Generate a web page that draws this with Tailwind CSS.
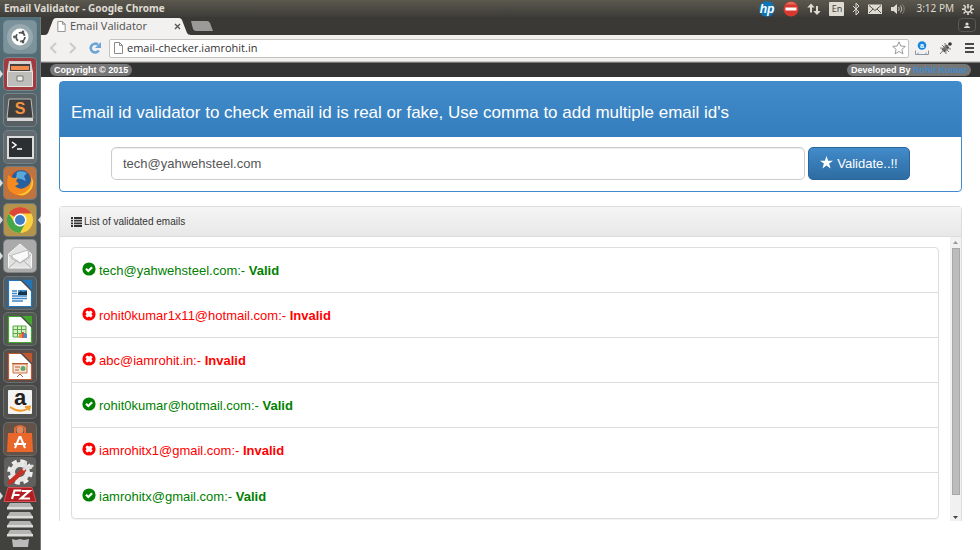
<!DOCTYPE html>
<html lang="en">
  <head>
    <meta charset="UTF-8" />
    <meta name="viewport" content="width=device-width, initial-scale=1.0" />
    <title>Email Validator</title>
    <script src="https://cdn.jsdelivr.net/npm/@tailwindcss/browser@4"></script>
  </head>
  <body
    class="flex min-h-screen flex-col bg-white font-['Liberation_Sans',Arial,sans-serif]"
  >
    <!-- Icons used more than once -->
    <svg class="hidden">
      <symbol id="page" viewBox="0 0 9 12">
        <path d="M.5.5h5l3 3v8h-8z M5.5.5v3h3" fill="#fff" stroke="#8a8a8a" />
      </symbol>
      <symbol id="ok" viewBox="0 0 14 14">
        <circle cx="7" cy="7" r="6.6" fill="#008000" />
        <path d="M4 6.800l2.300 2.200 3.800-3.800" fill="none" stroke="#fff" stroke-width="2.200" />
      </symbol>
      <symbol id="bad" viewBox="0 0 14 14">
        <circle cx="7" cy="7" r="6.6" fill="#f00" />
        <path d="M5.2 3.4L7 4.6l1.8-1.2 1.8 1.8L9.4 7l1.2 1.8-1.8 1.8L7 9.4l-1.8 1.2-1.8-1.8L4.6 7 3.4 5.2z" fill="#fff" />
      </symbol>
      <symbol id="doc" viewBox="0 0 32 32">
        <path d="M4.500 3.500h14l9 9v17h-23z" fill="#fff" stroke="currentColor" stroke-width="1.200" />
        <path d="M17 3h11v11z" fill="currentColor" />
        <path d="M16.500 2.500L28 14" stroke="#4a4a4a" stroke-width="1.500" />
      </symbol>
    </svg>

    <header
      class="flex h-[17px] items-center justify-between bg-linear-to-b from-[#5b594e] to-[#3e3c38] pl-1 pr-1.5 font-['Noto_Sans','Open_Sans',sans-serif] text-[10px] text-[#dfdbd2]"
    >
      <h1 class="text-[10px] font-bold">Email Validator - Google Chrome</h1>
      <div class="flex items-center">
        <svg class="mr-2 size-4" viewBox="0 0 16 16">
          <circle cx="8" cy="8" r="7.8" fill="#0d74b8" />
          <text x="8" y="11.5" text-anchor="middle" font-family="Liberation Sans" font-size="12" font-style="italic" font-weight="bold" fill="#fff">hp</text>
        </svg>
        <svg class="mr-2 size-4" viewBox="0 0 16 16">
          <circle cx="8" cy="8" r="7.5" fill="#d8392f" />
          <path d="M2.5 3.5a7 7 0 0 1 11 0z" fill="#e9685c" />
          <path d="M2.5 6.5h11v3h-11z" fill="#fff" />
        </svg>
        <svg class="mr-2 h-4 w-3.5" viewBox="0 0 14 16">
          <path d="M4 2.500L.3 6.500H3v5h2v-5h2.700z M10 14l3.700-4H11V5H9v5H6.300z" fill="#dfdbd2" />
        </svg>
        <span class="mr-2 h-3.5 w-[15px] rounded-[1px] bg-[#dfdbd2] text-center text-[9px] leading-3.5 text-[#45433d]">En</span>
        <svg class="mr-2 h-3.5 w-2" viewBox="0 0 8 14">
          <path d="M1 4l6 6-3 3V1l3 3-6 6" fill="none" stroke="#dfdbd2" />
        </svg>
        <svg class="mr-2 h-3 w-3.5" viewBox="0 0 14 12">
          <path d="M0 1.500h14v9.500H0z" fill="#dfdbd2" />
          <path d="M1 2.500l6 5 6-5M1 10l4-4M13 10L9 6" fill="none" stroke="#55534b" />
        </svg>
        <svg class="mr-2.5 h-3 w-4" viewBox="0 0 16 12">
          <path d="M1 4h2.500L7 1v10L3.500 8H1z" fill="#dfdbd2" />
          <path d="M8.500 4q1.500 2 0 4M10.500 2.500q2.700 3.500 0 7" fill="none" stroke="#c5c2b9" />
          <path d="M12.500 1.300q3.500 4.700 0 9.400" fill="none" stroke="#85837b" />
        </svg>
        <span class="mr-2">3:12 PM</span>
        <svg class="size-3" viewBox="0 0 12 12" fill="none" stroke="#dfdbd2">
          <path d="M4.200 3.400a3.200 3.200 0 1 0 3.600 0" stroke-width="1.500" />
          <path d="M6 1v4.500" stroke-width="1.600" />
          <path d="M0 6.200h2M10 6.200h2M1.600 2l1.500 1.500M10.400 2L8.900 3.500M1.600 10.500L3.100 9M10.400 10.500L8.900 9M6 10v2" stroke-width="1.600" />
        </svg>
      </div>
    </header>

    <div class="flex flex-1">
      <nav
        aria-label="Launcher"
        class="flex w-[41px] flex-col items-center border-r border-[#777] bg-linear-to-b from-[#54717b] via-[#4b4f50] to-[#41413e] pr-px pt-1"
      >
        <div class="flex h-[434px] flex-col justify-between">
          <svg class="size-8 rounded-sm bg-[#7d939c] ring-1 ring-white/20" viewBox="0 0 32 32">
            <circle cx="16" cy="16" r="13" fill="#97a8af" />
            <circle cx="16" cy="16" r="8.500" fill="#fff" />
            <circle cx="16.500" cy="16" r="4.400" fill="none" stroke="#555" stroke-width="1.800" stroke-dasharray="7.200 2" />
            <circle cx="10.500" cy="16" r="1.400" fill="#555" />
            <circle cx="19" cy="11" r="1.400" fill="#555" />
            <circle cx="19" cy="21" r="1.400" fill="#555" />
          </svg>
          <svg class="size-8 overflow-visible rounded-sm bg-[#a03b40] ring-1 ring-white/20" viewBox="0 0 32 32">
            <path d="M-4 12l3 4-3 4z" fill="#ddd" />
            <path d="M5 3h22l2 11H3z" fill="#d4d3d0" />
            <path d="M6 6h20v7H6z" fill="#47403c" />
            <path d="M7 8h18v4H7z" fill="#f28b4b" />
            <path d="M3.500 13.500h25v15h-25z" fill="#bdbdba" stroke="#e5e5e3" />
            <path d="M13 18h6v5h-6z" fill="#eee" stroke="#777" />
          </svg>
          <svg class="size-8 rounded-sm bg-[#596063] ring-1 ring-white/20" viewBox="0 0 32 32">
            <path d="M5 5h22l2 19H3z" fill="#3e3e3e" stroke="#bbb" />
            <path d="M3 24h26v3H3z" fill="#d6d6d6" />
            <text x="16" y="20" text-anchor="middle" font-family="Liberation Sans" font-size="16" font-weight="bold" fill="#f5923c">S</text>
          </svg>
          <svg class="size-8 rounded-sm bg-[#646b70] ring-1 ring-white/20" viewBox="0 0 32 32">
            <path d="M4 6h25v21H4z" fill="#2c2f32" stroke="#ddd" stroke-width="2" />
            <path d="M8 11l4 3-4 3M13 18h5" fill="none" stroke="#fff" stroke-width="1.500" />
          </svg>
          <svg class="size-8 overflow-visible rounded-sm bg-[#bd743e] ring-1 ring-white/20" viewBox="0 0 32 32">
            <path d="M-4 12l3 4-3 4z" fill="#ddd" />
            <circle cx="16" cy="16" r="13" fill="#e8601c" />
            <circle cx="17" cy="13" r="10" fill="#285f9e" />
            <path d="M13 5q5-2 10 1l-3 3 2 5-5-2-5-1z" fill="#59a9d8" />
            <path d="M4 8l5 3 5 0-2 3 3 3-4 2q5 5 11 1 7-4 5-13 4 8 0 15-5 7-13 6Q3 26 3 16z" fill="#f58a20" />
            <path d="M27 10q2 8-3 13t-12 4q8 4 14-3 6-7 1-14z" fill="#fbc52d" />
          </svg>
          <svg class="size-8 overflow-visible rounded-sm bg-[#b4934c] ring-1 ring-white/20" viewBox="0 0 32 32">
            <path d="M-4 12l3 4-3 4z M37 12l-3 4 3 4z" fill="#ddd" />
            <circle cx="16" cy="16" r="13" fill="#fad13c" />
            <path d="M16 16L4.700 9.500A13 13 0 0 1 27.300 9.500H16z" fill="#dc4838" />
            <path d="M4.700 9.500A13 13 0 0 0 16 29l5.500-10-11-.5z" fill="#45a64a" />
            <circle cx="16" cy="16" r="6.500" fill="#fff" />
            <circle cx="16" cy="16" r="5" fill="#3e7fc4" />
          </svg>
          <svg class="size-8 overflow-visible rounded-sm bg-[#aaa] ring-1 ring-white/30" viewBox="0 0 32 32">
            <path d="M-4 12l3 4-3 4z" fill="#ddd" />
            <path d="M4.500 14L16 4l11.500 10v14h-23z" fill="#e2e2e0" stroke="#f8f8f8" />
            <path d="M8 15l16-5 1 8-9 5-8-4z" fill="#fafafa" stroke="#bbb" />
            <path d="M4.500 28l9-8M27.500 28l-9-8M5 15l11 8 11-8" fill="none" stroke="#b5b5b5" />
          </svg>
          <svg class="size-8 rounded-sm bg-[#4a5e6c] text-[#2475b8] ring-1 ring-white/20" viewBox="0 0 32 32">
            <use href="#doc" />
            <path d="M8 14h5M8 16.500h5M8 19h15M8 21.500h15M8 24h11" stroke="#3b89ca" stroke-width="1.400" />
            <path d="M14 13h9v5h-9z" fill="#4a90c8" />
            <path d="M14 18v-2l3-2 2 1 4-1v4z" fill="#15344d" />
          </svg>
          <svg class="size-8 rounded-sm bg-[#505a4e] text-[#42a72c] ring-1 ring-white/20" viewBox="0 0 32 32">
            <use href="#doc" />
            <path d="M9 13h13v11H9z" fill="#d9efc9" stroke="#58a846" />
            <path d="M9 16.500h13M9 20.500h13M13.500 13v11M17.500 13v11" stroke="#58a846" />
            <path d="M15 21h3v4h-3z" fill="#ed8d37" />
            <path d="M18 19h2v6h-2z" fill="#d45454" />
            <path d="M20 21h3v4h-3z" fill="#4a8ac4" />
          </svg>
          <svg class="size-8 rounded-sm bg-[#5b4e49] text-[#bd5830] ring-1 ring-white/20" viewBox="0 0 32 32">
            <use href="#doc" />
            <path d="M9 14h14v9H9z" fill="#f8e2d1" stroke="#cf7045" />
            <path d="M8 13.500h16M11 17h5M11 20h4M13 27l3-3 3 3" fill="none" stroke="#b75a34" />
            <circle cx="19" cy="18.500" r="2.500" fill="#61a86a" />
          </svg>
          <svg class="size-8 rounded-sm bg-[#525250] ring-1 ring-white/20" viewBox="0 0 32 32">
            <rect x="4" y="4" width="24" height="24" rx="1" fill="#f4f4f2" />
            <text x="16" y="19" text-anchor="middle" font-family="Liberation Sans" font-size="22" font-weight="bold" fill="#222">a</text>
            <path d="M6 21q10 7 19 1M21 21l5-.5-1 4" fill="none" stroke="#f39a28" stroke-width="1.800" />
          </svg>
          <svg class="size-8 rounded-sm bg-[#625248] ring-1 ring-white/20" viewBox="0 0 32 32">
            <path d="M11 12V5q5-4 10 0v7" fill="none" stroke="#d96936" stroke-width="2" />
            <circle cx="16" cy="7" r="3.500" fill="#df875f" />
            <path d="M4 10h24l1 19H3z" fill="#ea672b" />
            <path d="M11 25l4.500-11h1L21 25M10 21h12" fill="none" stroke="#fff" stroke-width="2" />
          </svg>
        </div>
        <svg class="mt-0.5 h-[30px] w-8 rounded-sm bg-[#61605e]" viewBox="0 0 32 30">
          <circle cx="16" cy="15" r="11" fill="none" stroke="#eee" stroke-width="3.500" stroke-dasharray="5 3.640" />
          <circle cx="16" cy="15" r="7.500" fill="none" stroke="#e5e5e3" stroke-width="5" />
          <path d="M6 25.500L20 13" stroke="#c53126" stroke-width="4.500" stroke-linecap="round" />
          <path d="M19 13l5-4M22 4q-1 5 2 6 3 1 5-2" fill="none" stroke="#ddd" stroke-width="2.500" />
        </svg>
        <!-- Folded end of the launcher -->
        <svg class="h-[62px] w-9 overflow-visible" viewBox="0 0 36 62">
          <path d="M-2 5l3 4-3 4z" fill="#ddd" />
          <path d="M6 .5h24l4 14H2z" fill="#b41e22" stroke="#d65053" />
          <path d="M10 12l2.500-8.500h7M11.500 8h6M20 4h7.500L19 11.500h9" fill="none" stroke="#fff" stroke-width="2.200" />
          <path d="M8 16h20l3 5H5z M8 25h20l3 5H5z M8 34h20l3 5H5z M8 43h20l3 5H5z" fill="#b4b4b2" />
          <path d="M5 20h26v2.500H5z M5 29h26v2.500H5z M5 38h26v2.500H5z M5 47h26v2.500H5z" fill="#dcdcda" />
          <path d="M10 52l4 1 4-1 4 1 5-1-1 8H11z" fill="#bbb" />
        </svg>
      </nav>

      <div class="min-w-0 flex-1">
        <!-- Tab strip -->
        <div class="flex h-[18px] items-end justify-between bg-[#3b3936] pl-1 pr-1 font-['Open_Sans','Noto_Sans',sans-serif]">
          <div class="flex items-end">
            <div class="relative flex h-[17px] w-[146px] items-center pl-3 pr-1.5 text-[11px] text-[#4d4d4d]">
              <svg class="absolute inset-0 h-full w-full" viewBox="0 0 146 17" preserveAspectRatio="none">
                <path d="M0 17q2 0 3-2L8 2q1-2 3-2h123q2 0 3 2l5 13q1 2 4 2z" fill="#f2f1f0" />
              </svg>
              <svg class="relative mr-1 h-[11px] w-[9px]"><use href="#page" /></svg>
              <span class="relative flex-1">Email Validator</span>
              <button aria-label="Close tab" class="relative mr-1">
                <svg class="size-[7px]" viewBox="0 0 7 7"><path d="M1 1l5 5M6 1L1 6" stroke="#555" stroke-width="1.300" /></svg>
              </button>
            </div>
            <button aria-label="New tab" class="-ml-0.5 mb-1">
              <svg class="h-2.5 w-6" viewBox="0 0 24 10"><path d="M2 0h16q2 0 3 2l3 8H7q-2 0-3-2z" fill="#9b9a98" /></svg>
            </button>
          </div>
          <button aria-label="User" class="mb-[3px] flex h-3.5 w-[18px] items-center justify-center rounded-sm border border-[#5a5855]">
            <svg class="size-2" viewBox="0 0 8 8"><path d="M1 7q0-2 3-2t3 2z" fill="#ddd" /><circle cx="4" cy="3" r="1.600" fill="#ddd" /></svg>
          </button>
        </div>

        <!-- Toolbar -->
        <div class="flex h-[27px] items-center border-b border-[#c8c7c6] bg-[#f2f1f0] pl-2 pr-1.5">
          <button aria-label="Back" class="mr-3"><svg class="h-3 w-2" viewBox="0 0 8 12"><path d="M7 1L2 6l5 5" fill="none" stroke="#ccc" stroke-width="2.200" /></svg></button>
          <button aria-label="Forward" class="mr-3"><svg class="h-3 w-2" viewBox="0 0 8 12"><path d="M1 1l5 5-5 5" fill="none" stroke="#ccc" stroke-width="2.200" /></svg></button>
          <button aria-label="Reload" class="mr-2">
            <svg class="size-3" viewBox="0 0 12 12"><path d="M9.800 8.500A4.400 4.400 0 1 1 9 2.700" fill="none" stroke="#6ba5d7" stroke-width="2.600" /><path d="M12 0v6H6z" fill="#6ba5d7" /></svg>
          </button>
          <div class="flex h-[19px] flex-1 items-center rounded-xs border border-[#c3c2c1] bg-white pl-1 pr-0.5">
            <svg class="mr-1 h-3 w-[9px]"><use href="#page" /></svg>
            <input
              aria-label="Address"
              value="email-checker.iamrohit.in"
              class="min-w-0 flex-1 font-['Open_Sans','Noto_Sans',sans-serif] text-[11px] text-[#333] outline-none"
            />
            <svg class="size-3.5 shrink-0" viewBox="0 0 14 14"><path d="M7 .8l1.800 4.200 4.500.4-3.400 3 1 4.400L7 10.500l-3.900 2.300 1-4.400-3.400-3 4.500-.4z" fill="#fff" stroke="#999" /></svg>
          </div>
          <svg class="ml-1.5 size-3.5" viewBox="0 0 14 14">
            <circle cx="7" cy="4.500" r="4.300" fill="#1687e0" />
            <text x="7" y="7" text-anchor="middle" font-family="Liberation Sans" font-size="7" font-weight="bold" fill="#fff">a</text>
            <path d="M.5 9.500v4h13v-4M3 11.500v2M11 11.500v2" fill="none" stroke="#8a98a5" />
          </svg>
          <svg class="ml-2.5 size-3.5" viewBox="0 0 14 14">
            <path d="M4 10l5-5" stroke="#555" stroke-width="4" />
            <path d="M1 7l11 1M3 4l7 7M6 2l1 11M1 13l9-10" stroke="#777" />
            <circle cx="11" cy="3" r="1.800" fill="#333" />
          </svg>
          <button aria-label="Menu" class="ml-3"><svg class="h-2.5 w-[9px]" viewBox="0 0 9 10"><path d="M0 1h9M0 5h9M0 9h9" stroke="#484848" stroke-width="2" /></svg></button>
        </div>

        <!-- Credits -->
        <div class="flex h-[15px] items-center justify-between border-t border-[#777] bg-[#333] px-[9px] text-[9px] font-bold leading-3 text-white">
          <span class="rounded-full bg-[#777] px-1">Copyright © 2015</span>
          <span class="rounded-full bg-[#777] px-1">Developed By <a href="#" class="text-[#428bca]">Rohit Kumar</a></span>
        </div>

        <main class="mx-[18px] pt-1">
          <section class="rounded-sm border border-[#428bca]">
            <h2 class="flex h-[55px] items-center bg-linear-to-b from-[#428bca] to-[#357ebd] px-[11px] pt-1.5 text-[17px] text-white">
              Email id validator to check email id is real or fake, Use comma to add multiple email id's
            </h2>
            <form class="flex gap-[3px] px-[51px] pb-[11px] pt-2.5">
              <input
                aria-label="Email ids"
                type="text"
                value="tech@yahwehsteel.com"
                class="h-[33px] min-w-0 flex-1 rounded-[5px] border border-[#ccc] px-[11px] text-[13px] text-[#555] shadow-[inset_0_1px_1px_rgba(0,0,0,0.08)]"
              />
              <button
                type="button"
                class="flex h-[33px] w-[102px] items-center justify-center gap-1 rounded-[5px] border border-[#2b669a] bg-linear-to-b from-[#428bca] to-[#2d6ca2] text-[13px] text-white"
              >
                <svg class="mb-0.5 size-[13px]" viewBox="0 0 14 14"><path d="M7 0l1.800 5H14L9.800 8.200l1.600 5.200L7 10.200l-4.400 3.200 1.600-5.200L0 5h5.200z" fill="#fff" /></svg>
                Validate..!!
              </button>
            </form>
          </section>

          <section class="mt-3.5 rounded-t-sm border border-b-0 border-[#ddd]">
            <h3 class="flex h-[30px] items-center gap-0.5 border-b border-[#ddd] bg-linear-to-b from-[#f5f5f5] to-[#e8e8e8] px-[11px] text-[10px] text-[#333]">
              <svg class="h-2.5 w-[11px]" viewBox="0 0 11 10"><path d="M0 1h2M3 1h8M0 3.700h2M3 3.700h8M0 6.400h2M3 6.400h8M0 9h2M3 9h8" stroke="#333" stroke-width="1.800" /></svg>
              List of validated emails
            </h3>
            <div class="flex h-[284px]">
              <div class="flex-1 px-[11px] pt-2.5">
                <ul class="divide-y divide-[#ddd] rounded-sm border border-[#ddd] text-[13px] shadow-[0_1px_1px_rgba(0,0,0,0.05)]">
                  <li class="flex h-[45px] items-center gap-[3px] px-2.5 pt-0.5 text-[#008000]">
                    <svg class="mb-1 size-3.5"><use href="#ok" /></svg>
                    <p>tech@yahwehsteel.com:- <b>Valid</b></p>
                  </li>
                  <li class="flex h-[45px] items-center gap-[3px] px-2.5 pt-0.5 text-[#ff0000]">
                    <svg class="mb-1 size-3.5"><use href="#bad" /></svg>
                    <p>rohit0kumar1x11@hotmail.com:- <b>Invalid</b></p>
                  </li>
                  <li class="flex h-[45px] items-center gap-[3px] px-2.5 pt-0.5 text-[#ff0000]">
                    <svg class="mb-1 size-3.5"><use href="#bad" /></svg>
                    <p>abc@iamrohit.in:- <b>Invalid</b></p>
                  </li>
                  <li class="flex h-[45px] items-center gap-[3px] px-2.5 pt-0.5 text-[#008000]">
                    <svg class="mb-1 size-3.5"><use href="#ok" /></svg>
                    <p>rohit0kumar@hotmail.com:- <b>Valid</b></p>
                  </li>
                  <li class="flex h-[45px] items-center gap-[3px] px-2.5 pt-0.5 text-[#ff0000]">
                    <svg class="mb-1 size-3.5"><use href="#bad" /></svg>
                    <p>iamrohitx1@gmail.com:- <b>Invalid</b></p>
                  </li>
                  <li class="flex h-[45px] items-center gap-[3px] px-2.5 pt-0.5 text-[#008000]">
                    <svg class="mb-1 size-3.5"><use href="#ok" /></svg>
                    <p>iamrohitx@gmail.com:- <b>Valid</b></p>
                  </li>
                </ul>
              </div>
              <!-- Scrollbar -->
              <div class="flex w-[11px] flex-col items-center bg-[#f1f1f1]">
                <svg class="my-1 h-[3px] w-[5px] shrink-0" viewBox="0 0 5 3"><path d="M0 3L2.500 0 5 3z" fill="#999" /></svg>
                <div class="mb-[21px] w-2 flex-1 border border-[#a8a8a8] bg-[#bcbcbc]"></div>
                <svg class="mb-0.5 h-[3px] w-[5px] shrink-0" viewBox="0 0 5 3"><path d="M0 0l2.500 3L5 0z" fill="#444" /></svg>
              </div>
            </div>
          </section>
        </main>
      </div>
    </div>
  </body>
</html>
